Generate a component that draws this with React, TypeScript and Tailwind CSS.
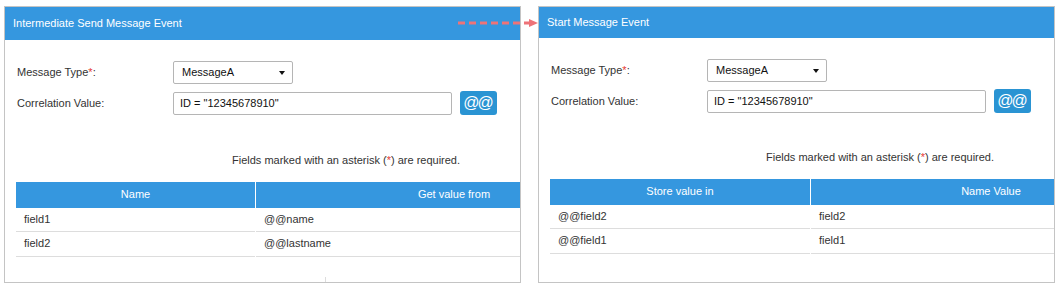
import React from "react";

const font = { fontFamily: '"Liberation Sans", Arial, sans-serif' };

function SelectBox() {
  return (
    <div className="flex h-[23px] w-[120px] items-center justify-between rounded-[2px] border border-[#b5b5b5] bg-white pl-[8px] pr-[7px] text-[11px] text-[#111]">
      <span>MessageA</span>
      <svg width="6" height="4" viewBox="0 0 6 4">
        <path d="M0 0 H6 L3 4 Z" fill="#111" />
      </svg>
    </div>
  );
}

function FormBlock() {
  return (
    <div className="flex flex-col gap-[7px]">
      <div className="flex items-center">
        <div className="w-[157px] pl-[1px] text-[11px] text-[#333]">
          Message Type<span className="text-[#e53935]">*</span>:
        </div>
        <SelectBox />
      </div>
      <div className="flex items-center">
        <div className="w-[157px] pl-[1px] text-[11px] text-[#333]">Correlation Value:</div>
        <div className="flex h-[23px] w-[279px] items-center rounded-[2px] border border-[#b5b5b5] bg-white pl-[6px] text-[11px] text-[#111]">
          ID = "12345678910"
        </div>
        <div className="ml-[8px] flex h-[24px] w-[37px] items-center justify-center rounded-[3px] bg-[#2a94d3] text-[16px] leading-none tracking-[-2px] text-white">
          <span className="-ml-[2px]">@@</span>
        </div>
      </div>
    </div>
  );
}

function Table({
  c1,
  c2,
  w1,
  w2,
  rows,
}: {
  c1: string;
  c2: string;
  w1: number;
  w2: number;
  rows: [string, string][];
}) {
  return (
    <div className="flex w-max flex-col text-[11px]">
      <div className="flex h-[26px] gap-[1px]">
        <div style={{ width: w1 }} className="flex shrink-0 items-center justify-center bg-[#3597df] text-white">
          {c1}
        </div>
        <div style={{ width: w2 }} className="flex shrink-0 items-center justify-center bg-[#3597df] text-white">
          {c2}
        </div>
      </div>
      {rows.map((r, i) => (
        <div key={i} className={`flex gap-[1px] ${i === 1 ? "h-[25px]" : "h-[24px]"}`}>
          <div style={{ width: w1 }} className="flex shrink-0 items-center border-b border-[#dddddd] pl-[8px] text-[#333]">
            {r[0]}
          </div>
          <div style={{ width: w2 }} className="flex shrink-0 items-center border-b border-[#dddddd] pl-[8px] text-[#333]">
            {r[1]}
          </div>
        </div>
      ))}
    </div>
  );
}

function Required() {
  return (
    <div className="ml-[216px] text-[11px] text-[#333]">
      Fields marked with an asterisk (<span className="text-[#e53935]">*</span>) are required.
    </div>
  );
}

export default function App() {
  return (
    <div style={font} className="relative h-[291px] w-[1059px] overflow-hidden bg-white">
      <div className="flex gap-[17px] pl-[4px] pt-[6px]">
        {/* Left panel */}
        <div className="flex h-[277px] w-[517px] shrink-0 flex-col overflow-hidden border border-[#c4c4c4]">
          <div className="flex h-[33px] shrink-0 items-center bg-[#3597df] pl-[8px] text-[11px] text-white">
            Intermediate Send Message Event
          </div>
          <div className="flex flex-col pl-[11px] pt-[21px]">
            <FormBlock />
            <div className="mt-[37px]">
              <Required />
            </div>
            <div className="mt-[13px]">
              <Table
                c1="Name"
                c2="Get value from"
                w1={239}
                w2={396}
                rows={[
                  ["field1", "@@name"],
                  ["field2", "@@lastname"],
                ]}
              />
            </div>
            <div className="ml-[309px] mt-[20px] h-[8px] w-px bg-[#dddddd]" />
          </div>
        </div>

        {/* Right panel */}
        <div className="flex h-[277px] w-[517px] shrink-0 flex-col overflow-hidden border border-[#c4c4c4]">
          <div className="flex h-[31px] shrink-0 items-center bg-[#3597df] pl-[8px] text-[11px] text-white">
            Start Message Event
          </div>
          <div className="flex flex-col pl-[11px] pt-[21px]">
            <FormBlock />
            <div className="mt-[36px]">
              <Required />
            </div>
            <div className="mt-[13px]">
              <Table
                c1="Store value in"
                c2="Name Value"
                w1={260}
                w2={360}
                rows={[
                  ["@@field2", "field2"],
                  ["@@field1", "field1"],
                ]}
              />
            </div>
          </div>
        </div>
      </div>

      {/* Connector arrow overlay */}
      <svg className="absolute left-[456px] top-[18px]" width="84" height="10" viewBox="0 0 84 10">
        <line x1="2" y1="5" x2="74" y2="5" stroke="#ee7378" strokeWidth="3" strokeDasharray="7 4" />
        <path d="M73 1 L82 5 L73 9 Z" fill="#ee7378" />
      </svg>
    </div>
  );
}
